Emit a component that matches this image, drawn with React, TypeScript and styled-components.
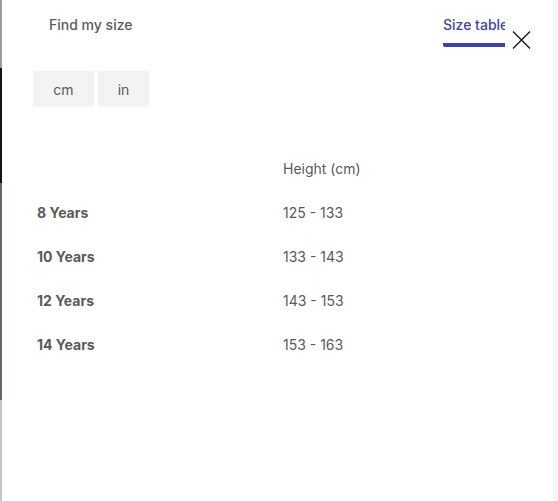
import React, { useState } from 'react';
import styled, { createGlobalStyle } from 'styled-components';

const GlobalStyle = createGlobalStyle`
  html, body {
    margin: 0;
    padding: 0;
    background: #ffffff;
  }
  body {
    font-family: Inter, 'Liberation Sans', sans-serif;
    color: #5a5a5a;
  }
`;

const Screen = styled.div`
  display: flex;
  height: 501px;
  overflow: hidden;
`;
// page behind the drawer, a thin sliver stays visible on the left
const BehindEdge = styled.div`
  width: 2px;
  flex-shrink: 0;
  background: linear-gradient(
    to bottom,
    #9a9a9a 0,
    #9a9a9a 68px,
    #141414 68px,
    #141414 183px,
    #6c6660 183px,
    #6c6660 400px,
    #c4c4c4 400px,
    #c4c4c4 100%
  );
`;
const Drawer = styled.div`
  flex-grow: 1;
  background: #fff;
  padding: 15px 0 0 31px;
  box-sizing: border-box;
  display: flex;
  flex-direction: column;
`;
const ScrollTrack = styled.div`
  width: 5px;
  flex-shrink: 0;
  background: #f7f7f7;
`;
const Header = styled.div`
  display: flex;
  align-items: flex-start;
  gap: 6px;
`;
const TabList = styled.div`
  display: flex;
  width: 472px;
  overflow: hidden;
`;
interface ITab {
  $active?: boolean;
  $width?: number;
}
const Tab = styled.button<ITab>`
  all: unset;
  flex-shrink: 0;
  box-sizing: border-box;
  width: ${({ $width }) => ($width ? `${$width}px` : 'auto')};
  padding: 0 0 8px ${({ $active }) => ($active ? '0' : '16px')};
  font-size: 14px;
  line-height: 20px;
  font-weight: 500;
  color: ${({ $active }) => ($active ? '#3d46a8' : '#5a5a5a')};
  border-bottom: 4px solid
    ${({ $active }) => ($active ? '#3a44a6' : 'transparent')};
  border-bottom-left-radius: 2px;
  white-space: nowrap;
  cursor: pointer;
`;
const CloseButton = styled.button`
  all: unset;
  margin-top: 16px;
  width: 20px;
  height: 18px;
  display: flex;
  align-items: center;
  justify-content: center;
  cursor: pointer;
`;
const UnitSwitch = styled.div`
  display: flex;
  gap: 4px;
  margin-top: 22px;
`;
interface IUnit {
  $w: number;
}
const UnitButton = styled.button<IUnit>`
  all: unset;
  width: ${({ $w }) => $w}px;
  height: 36px;
  display: flex;
  align-items: center;
  justify-content: center;
  background: #f3f3f3;
  font-size: 14px;
  color: #5a5a5a;
  cursor: pointer;
`;
const Table = styled.div`
  margin-top: 40px;
  display: grid;
  grid-template-columns: 246px 1fr;
  width: 490px;
`;
interface ICell {
  $bold?: boolean;
}
const Cell = styled.div<ICell>`
  padding: 12px 4px;
  font-size: 14px;
  line-height: 20px;
  font-weight: ${({ $bold }) => ($bold ? 700 : 400)};
  color: #5a5a5a;
`;

const rows = [
  { label: '8 Years', cm: '125 - 133', inch: '49 - 52' },
  { label: '10 Years', cm: '133 - 143', inch: '52 - 56' },
  { label: '12 Years', cm: '143 - 153', inch: '56 - 60' },
  { label: '14 Years', cm: '153 - 163', inch: '60 - 64' },
];

const CloseIcon = () => (
  <svg width='19' height='18' viewBox='0 0 19 18'>
    <path d='M1 0.5 L18 17.5 M18 0.5 L1 17.5' stroke='#222' strokeWidth='1.5' fill='none' />
  </svg>
);

const App = () => {
  const [unit, setUnit] = useState<'cm' | 'in'>('cm');
  return (
    <>
      <GlobalStyle />
      <Screen>
        <BehindEdge />
        <Drawer>
          <Header>
            <TabList>
              <Tab $width={410}>Find my size</Tab>
              <Tab $active>Size table</Tab>
            </TabList>
            <CloseButton aria-label='close'>
              <CloseIcon />
            </CloseButton>
          </Header>
          <UnitSwitch>
            <UnitButton $w={61} onClick={() => setUnit('cm')}>
              cm
            </UnitButton>
            <UnitButton $w={51} onClick={() => setUnit('in')}>
              in
            </UnitButton>
          </UnitSwitch>
          <Table>
            <Cell />
            <Cell>{unit === 'cm' ? 'Height (cm)' : 'Height (in)'}</Cell>
            {rows.map((row) => (
              <React.Fragment key={row.label}>
                <Cell $bold>{row.label}</Cell>
                <Cell>{unit === 'cm' ? row.cm : row.inch}</Cell>
              </React.Fragment>
            ))}
          </Table>
        </Drawer>
        <ScrollTrack />
      </Screen>
    </>
  );
};

export default App;
